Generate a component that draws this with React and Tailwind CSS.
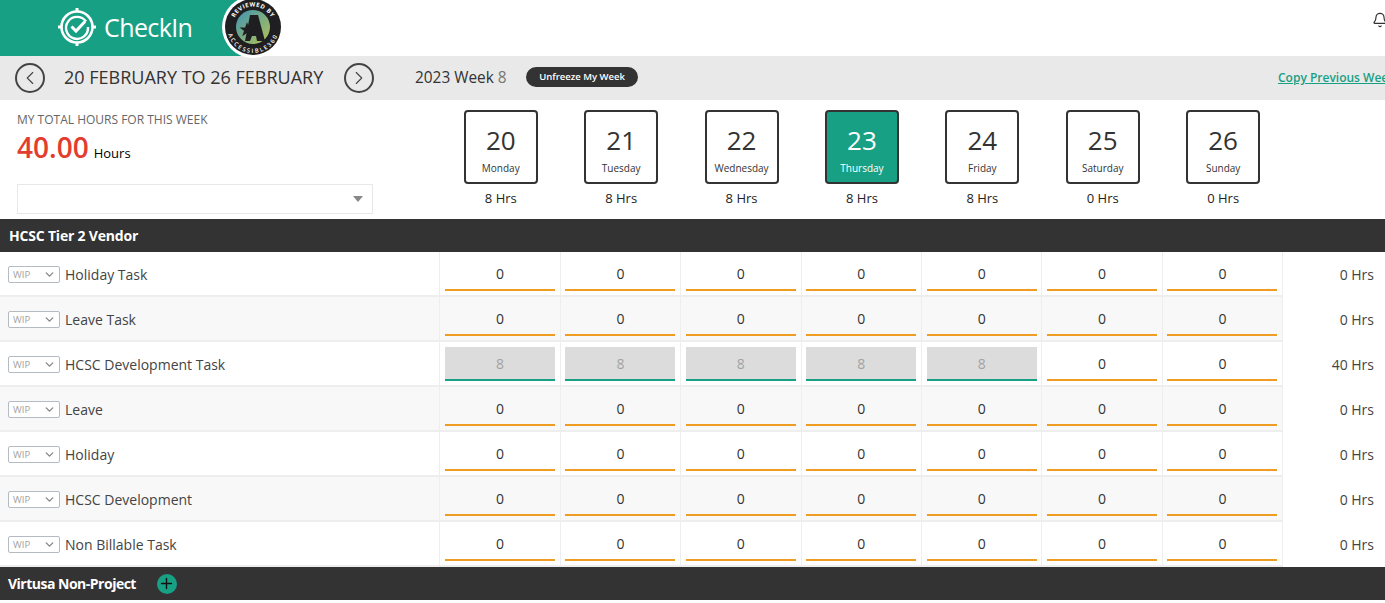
import React from "react";
import { Bell, ChevronDown, ChevronLeft, ChevronRight, Plus } from "lucide-react";

const days = [
  { num: 20, name: "Monday", hrs: "8 Hrs" },
  { num: 21, name: "Tuesday", hrs: "8 Hrs" },
  { num: 22, name: "Wednesday", hrs: "8 Hrs" },
  { num: 23, name: "Thursday", hrs: "8 Hrs", active: true },
  { num: 24, name: "Friday", hrs: "8 Hrs" },
  { num: 25, name: "Saturday", hrs: "0 Hrs" },
  { num: 26, name: "Sunday", hrs: "0 Hrs" },
];

const tasks = [
  { name: "Holiday Task", total: "0 Hrs" },
  { name: "Leave Task", total: "0 Hrs" },
  { name: "HCSC Development Task", total: "40 Hrs", filled: true },
  { name: "Leave", total: "0 Hrs" },
  { name: "Holiday", total: "0 Hrs" },
  { name: "HCSC Development", total: "0 Hrs" },
  { name: "Non Billable Task", total: "0 Hrs" },
];

const gridCols = "grid grid-cols-[440.4px_repeat(7,120.4px)_1fr]";

const LogoMark = () => (
  <svg width="40" height="40" viewBox="0 0 40 40" fill="none" stroke="white">
    <circle cx="20" cy="20" r="15.5" strokeWidth="2.6" />
    <path d="M20 1v3.5M20 35.5V39M1 20h3.5M35.5 20H39" strokeWidth="3" />
    <path d="M29 14.5A11 11 0 1 0 31 20" strokeWidth="2.4" />
    <path d="M14.5 19.5l4.5 4.5 9-9.5" strokeWidth="3" />
  </svg>
);

const Badge = () => (
  <svg width="62" height="62" viewBox="0 0 62 62" className="absolute left-[222px] top-[-2px]">
    <defs>
      <linearGradient id="badgeFill" x1="0" y1="0" x2="1" y2="1">
        <stop offset="0" stopColor="#3f93b4" />
        <stop offset="1" stopColor="#b4c455" />
      </linearGradient>
      <path id="badgeTop" d="M11.2 23.7A20.5 20.5 0 0 1 50.8 23.7" />
      <path id="badgeBottom" d="M5.4 24.5A26 26 0 1 0 56.6 24.5" />
    </defs>
    <circle cx="31" cy="29" r="31" fill="white" />
    <circle cx="31" cy="29" r="28" fill="#1f1f21" />
    <circle cx="31" cy="29" r="17" fill="url(#badgeFill)" />
    <text fontSize="6" fontWeight="700" fill="white" letterSpacing="0.5" textAnchor="middle" fontFamily="'Open Sans', sans-serif">
      <textPath href="#badgeTop" startOffset="50%">REVIEWED BY</textPath>
    </text>
    <text fontSize="5.8" fontWeight="600" fill="white" letterSpacing="1.8" textAnchor="middle" fontFamily="'Open Sans', sans-serif">
      <textPath href="#badgeBottom" startOffset="50%">ACCESSIBLE360</textPath>
    </text>
    <path d="M28 17h8l7 26h-8l-1-5h-4l-2 5h-5z" fill="#1f1f21" />
    <path d="M25 24l1.9 5.4h5.6l-4.5 3.4 1.7 5.4-4.7-3.3-4.7 3.3 1.7-5.4-4.5-3.4h5.6z" fill="#1f1f21" />
  </svg>
);

const NavButton = ({ children }) => (
  <button className="flex h-[30px] w-[30px] shrink-0 items-center justify-center rounded-full border-2 border-[#444] text-[#444]">
    {children}
  </button>
);

const DayCard = ({ day }) => (
  <div className="flex flex-col items-center pl-[0.4px]">
    <div
      className={`flex h-[74px] w-[74px] flex-col items-center rounded-[4px] border-2 border-[#333] pt-[10px] ${
        day.active ? "bg-[#18a085] text-white" : "bg-white text-[#333]"
      }`}
    >
      <span className="text-[26px] font-medium leading-[36px]">{day.num}</span>
      <span className="mt-[3px] text-[10px] leading-[14px]">{day.name}</span>
    </div>
    <span className="mt-[5px] text-[13px] leading-[18px] text-[#222]">{day.hrs}</span>
  </div>
);

const HourCell = ({ filled, index }) => {
  const locked = filled && index < 5;
  return (
    <div className="border-b-2 border-r border-[#eeeeee] px-[4.7px] pt-[5px]">
      <div
        className={`flex h-[34px] items-center justify-center border-b-2 py-[3px] text-[14px] ${
          locked ? "border-[#18a085] bg-[#dcdcdc] text-[#a3a3a3]" : "border-[#ee9c22] text-[#333]"
        }`}
      >
        {locked ? 8 : 0}
      </div>
    </div>
  );
};

const TaskRow = ({ task, alt }) => (
  <div className={`${gridCols} h-[45px] ${alt ? "bg-[#f8f8f8]" : "bg-white"}`}>
    <div className="flex items-center gap-[5px] border-b-2 border-r border-[#eeeeee] pl-[8px] pt-[2px]">
      <div className="flex h-[17px] w-[52px] items-center justify-between rounded-[2px] border border-[#b4bbc2] bg-white pl-[4px] pr-[3px] text-[9.5px] leading-none text-[#a2a2a2]">
        <span className="pt-[1px]">WIP</span>
        <ChevronDown size={13} strokeWidth={2.6} className="text-[#888]" />
      </div>
      <span className="text-[14px] text-[#444]">{task.name}</span>
    </div>
    {days.map((d, i) => (
      <HourCell key={d.num} filled={task.filled} index={i} />
    ))}
    <div className="flex items-center justify-end bg-white pr-[11px] text-[14px] text-[#444]">{task.total}</div>
  </div>
);

export default function App() {
  return (
    <div className="h-[603px] w-[1385px] overflow-hidden bg-white font-['Open_Sans',sans-serif]">
      {/* top bar */}
      <header className="relative flex h-[56px] items-center justify-between">
        <div className="flex h-full w-[245px] items-center gap-[7px] bg-[#18a085] pb-[2px] pl-[57px] text-white">
          <LogoMark />
          <span className="text-[25px] leading-none tracking-[-0.6px]">CheckIn</span>
        </div>
        <Badge />
        <Bell size={16} strokeWidth={1.8} className="mb-[16px] mr-[-3px] text-[#333]" />
      </header>

      {/* week nav */}
      <div className="flex h-[44px] items-center bg-[#e9e9e9] pl-[15px]">
        <NavButton>
          <ChevronLeft size={22} strokeWidth={1.2} />
        </NavButton>
        <h1 className="ml-[19px] w-[280px] shrink-0 whitespace-nowrap pb-[1px] text-[18px] font-medium text-[#333]">20 FEBRUARY TO 26 FEBRUARY</h1>
        <NavButton>
          <ChevronRight size={22} strokeWidth={1.2} />
        </NavButton>
        <div className="ml-[41px] w-[111px] shrink-0 whitespace-nowrap text-[15.4px] font-medium text-[#333]">
          2023 Week <span className="font-normal text-[#777]">8</span>
        </div>
        <button className="mb-[2px] h-[20px] w-[112px] shrink-0 rounded-full bg-[#333] text-[9.5px] font-semibold text-white">Unfreeze My Week</button>
        <a className="ml-[640px] shrink-0 whitespace-nowrap text-[12px] font-semibold text-[#18a085] underline">Copy Previous Week</a>
      </div>

      {/* summary + days */}
      <div className={`${gridCols} h-[119px] pt-[10px]`}>
        <div className="pl-[17px] pt-[2px]">
          <p className="text-[12px] leading-[16px] text-[#666]">MY TOTAL HOURS FOR THIS WEEK</p>
          <p className="flex items-baseline gap-[5px] leading-[39px]">
            <span className="text-[28px] font-semibold text-[#e23d2f]">40.00</span>
            <span className="text-[13px] font-medium text-black">Hours</span>
          </p>
          <div className="mt-[11px] flex h-[30px] w-[356px] items-center justify-end border border-[#e8e8e8] pr-[9px]">
            <span className="h-0 w-0 border-x-[5px] border-t-[6px] border-x-transparent border-t-[#888]" />
          </div>
        </div>
        {days.map((d) => (
          <DayCard key={d.num} day={d} />
        ))}
      </div>

      {/* task list */}
      <div className="flex h-[33px] items-center bg-[#333] pl-[9px] text-[14px] font-bold tracking-[-0.2px] text-white">HCSC Tier 2 Vendor</div>
      {tasks.map((t, i) => (
        <TaskRow key={t.name} task={t} alt={i % 2 === 1} />
      ))}
      <div className="flex h-[33px] items-center gap-[21px] bg-[#333] pl-[8px] text-[14px] font-bold tracking-[-0.5px] text-white">
        Virtusa Non-Project
        <span className="flex h-[20px] w-[20px] items-center justify-center rounded-full bg-[#18a085] text-[#111]">
          <Plus size={17} strokeWidth={2} />
        </span>
      </div>
    </div>
  );
}
